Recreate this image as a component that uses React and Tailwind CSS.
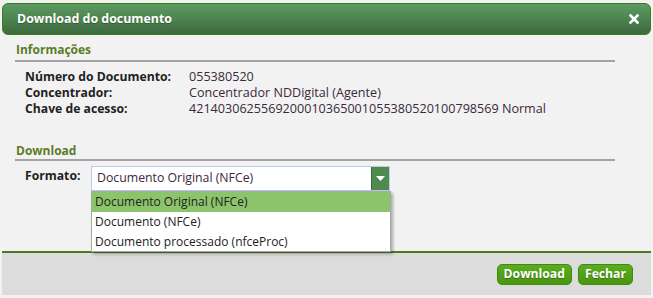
import React from "react";

const font = { fontFamily: '"Open Sans", "Noto Sans", sans-serif' };

function Row({ label, value }) {
  return (
    <div className="flex h-[16px] items-center">
      <div className="w-[164px] font-bold text-[12.2px] text-[#222]">{label}</div>
      <div className="text-[12.6px] text-[#3a2a3a]">{value}</div>
    </div>
  );
}

export default function App() {
  return (
    <div className="w-[653px] h-[298px] bg-[#f2f2f2] pt-[3px] overflow-hidden" style={font}>
      <div className="mx-[2px] h-[32px] rounded-[6px] border border-[#3d7a1c] bg-gradient-to-b from-[#5c9c62] to-[#3e6a3e] flex items-center justify-between pl-[14px] pr-[11px]">
        <span className="text-white font-bold text-[12.4px] [text-shadow:0_1px_1px_rgba(0,0,0,0.3)]">Download do documento</span>
        <svg width="10" height="10" viewBox="0 0 10 10">
          <path d="M1.5 1.5 L8.5 8.5 M8.5 1.5 L1.5 8.5" stroke="white" strokeWidth="2.6" strokeLinecap="square" />
        </svg>
      </div>

      <div className="pl-[15px] pr-[38px] pt-[5px]">
        <div className="border-b-2 border-[#a3a3a3] h-[22px] flex items-center">
          <span className="text-[#5b7d26] font-bold text-[12px] pl-[1px]">Informações</span>
        </div>
        <div className="pl-[10px] pt-[7px] flex flex-col">
          <Row label="Número do Documento:" value="055380520" />
          <Row label="Concentrador:" value="Concentrador NDDigital (Agente)" />
          <Row label="Chave de acesso:" value="4214030625569200010365001055380520100798569 Normal" />
        </div>
        <div className="mt-[25px] border-b-2 border-[#a3a3a3] h-[19px] flex items-center">
          <span className="text-[#5b7d26] font-bold text-[12px] pl-[1px]">Download</span>
        </div>
        <div className="pl-[10px] pt-[5px] flex items-start">
          <div className="w-[66px] font-bold text-[12.2px] text-[#222] pt-[1px]">Formato:</div>
          <div className="relative w-[299px]">
            <div className="h-[25px] bg-white border border-[#b6cfe6] flex items-center">
              <span className="flex-1 pl-[5px] text-[12.3px] text-[#3a2a3a]">Documento Original (NFCe)</span>
              <div className="w-[18px] h-[23px] bg-[#4f8a4f] border-l border-[#3e6e3e] flex items-center justify-center">
                <svg width="9" height="5" viewBox="0 0 9 5">
                  <path d="M0 0 L9 0 L4.5 5 Z" fill="white" />
                </svg>
              </div>
            </div>
            <div className="absolute left-0 top-[25px] w-[300px] bg-white border border-[#a9a9a9] shadow-[2px_2px_3px_rgba(0,0,0,0.3)] z-10">
              <div className="h-[20px] bg-[#8cc46c] flex items-center pl-[3px] text-[12px] text-[#222]">Documento Original (NFCe)</div>
              <div className="h-[20px] flex items-center pl-[3px] text-[12px] text-[#222]">Documento (NFCe)</div>
              <div className="h-[19px] flex items-center pl-[3px] text-[12px] text-[#222]">Documento processado (nfceProc)</div>
            </div>
          </div>
        </div>
      </div>

      <div className="mx-[2px] mt-[60px] h-[44px] border-t-2 border-[#4c7a1e] bg-[#dcdcdc] flex items-center justify-end gap-[6px] pr-[18px]">
        <button className="h-[21px] px-[6px] rounded-[5px] border border-[#3f8a10] bg-gradient-to-b from-[#5aad1e] to-[#4a9612] text-white font-bold text-[12.2px] leading-none [text-shadow:0_1px_1px_rgba(0,0,0,0.3)]">Download</button>
        <button className="h-[21px] px-[6px] rounded-[5px] border border-[#3f8a10] bg-gradient-to-b from-[#5aad1e] to-[#4a9612] text-white font-bold text-[12.2px] leading-none [text-shadow:0_1px_1px_rgba(0,0,0,0.3)]">Fechar</button>
      </div>
    </div>
  );
}
